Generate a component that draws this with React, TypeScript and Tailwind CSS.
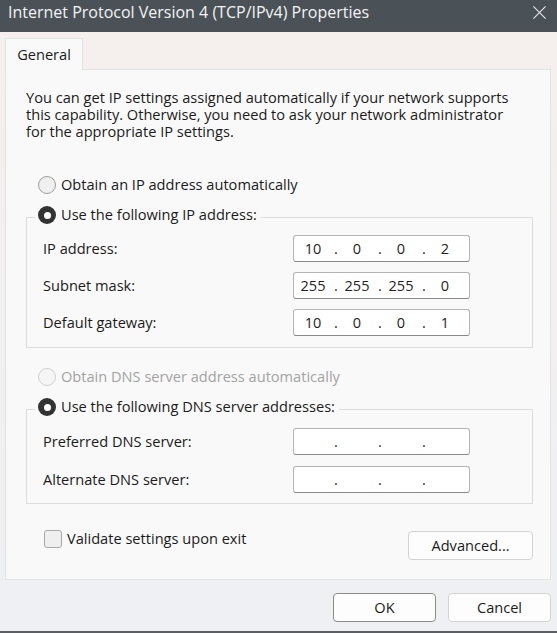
import React from "react";

const font = { fontFamily: '"Open Sans", "Noto Sans", sans-serif' };

function Radio({ checked, disabled }: { checked?: boolean; disabled?: boolean }) {
  if (checked) {
    return (
      <span className="flex h-[18px] w-[18px] shrink-0 items-center justify-center rounded-full bg-[#333333]">
        <span className="h-[7px] w-[7px] rounded-full bg-white" />
      </span>
    );
  }
  return (
    <span
      className={
        disabled
          ? "h-[18px] w-[18px] shrink-0 rounded-full border border-[#d0d0d0] bg-[#f5f5f5]"
          : "h-[18px] w-[18px] shrink-0 rounded-full border border-[#9d9d9d] bg-[#f0f0f0]"
      }
    />
  );
}

function IpBox({ parts }: { parts: string[] }) {
  return (
    <div className="flex h-[27px] w-[177px] items-center rounded-[3px] border border-[#b4b4b4] border-b-[#8a8a8a] bg-white pl-[2px] text-[14.5px] text-[#1e1e1e]">
      {parts.map((p, i) => (
        <React.Fragment key={i}>
          <span className="w-[34px] text-center">{p}</span>
          {i < 3 && <span className="w-[10px] pl-[2px] text-center">.</span>}
        </React.Fragment>
      ))}
    </div>
  );
}

function Row({ label, parts }: { label: string; parts: string[] }) {
  return (
    <div className="flex h-[27px] items-center">
      <span className="w-[250px]">{label}</span>
      <IpBox parts={parts} />
    </div>
  );
}

export default function App() {
  return (
    <div
      className="flex h-[633px] w-[557px] flex-col overflow-hidden bg-linear-to-b from-[#f6efee] to-[#eef0f3] text-[14.6px] text-[#1b1b1b]"
      style={font}
    >
      {/* Title bar */}
      <div className="flex h-[32px] shrink-0 items-center justify-between bg-[#4a5157] pl-[8px] pr-[10px]">
        <span className="pb-[8px] text-[16px] leading-[22px] text-[#f4f4f4]">Internet Protocol Version 4 (TCP/IPv4) Properties</span>
        <svg width="15" height="15" viewBox="0 0 16 16" className="mb-[7px]">
          <path d="M1.5 1.5 L14.5 14.5 M14.5 1.5 L1.5 14.5" stroke="#e6e6e6" strokeWidth="1.2" fill="none" />
        </svg>
      </div>

      <div className="flex flex-1 flex-col pl-[5px] pr-[6px] pt-[6px]">
        {/* Tab */}
        <div className="relative z-10 -mb-[1px] flex h-[32px] w-[78px] items-center justify-center rounded-t-[2px] border border-b-0 border-[#e2e2e2] bg-[#f9f9f9] text-[14.6px]">
          General
        </div>

        {/* Panel */}
        <div className="flex h-[511px] flex-col border border-[#e3e3e3] bg-[#f9f9f9]">
          <p className="pl-[20px] pt-[19px] leading-[17px]">
            You can get IP settings assigned automatically if your network supports
            <br />
            this capability. Otherwise, you need to ask your network administrator
            <br />
            for the appropriate IP settings.
          </p>

          <div className="ml-[32px] mt-[35px] flex h-[20px] items-center gap-[5px]">
            <Radio />
            <span>Obtain an IP address automatically</span>
          </div>

          <fieldset className="ml-[20px] mr-[17px] mt-[10px] border border-[#dcdcdc] pb-[11px]">
            <legend className="ml-[8px] flex h-[24px] items-start pl-[3px] pr-[4px]">
              <span className="flex h-[20px] items-center gap-[5px]">
                <Radio checked />
                <span>Use the following IP address:</span>
              </span>
            </legend>
            <div className="flex flex-col gap-[10px] pl-[16px] pt-[6px]">
              <Row label="IP address:" parts={["10", "0", "0", "2"]} />
              <Row label="Subnet mask:" parts={["255", "255", "255", "0"]} />
              <Row label="Default gateway:" parts={["10", "0", "0", "1"]} />
            </div>
          </fieldset>

          <div className="ml-[32px] mt-[19px] flex h-[20px] items-center gap-[5px] text-[#a3a3a3]">
            <Radio disabled />
            <span>Obtain DNS server address automatically</span>
          </div>

          <fieldset className="ml-[20px] mr-[17px] mt-[10px] border border-[#dcdcdc] pb-[10px]">
            <legend className="ml-[8px] flex h-[24px] items-start pl-[3px] pr-[4px]">
              <span className="flex h-[20px] items-center gap-[5px]">
                <Radio checked />
                <span>Use the following DNS server addresses:</span>
              </span>
            </legend>
            <div className="flex flex-col gap-[11px] pl-[16px] pt-[7px]">
              <Row label="Preferred DNS server:" parts={["", "", "", ""]} />
              <Row label="Alternate DNS server:" parts={["", "", "", ""]} />
            </div>
          </fieldset>

          <div className="ml-[38px] mr-[17px] mt-[26px] flex items-start justify-between">
            <div className="flex h-[18px] items-center gap-[5px]">
              <span className="h-[18px] w-[18px] rounded-[3px] border border-[#a8a8a8] bg-[#efefef]" />
              <span>Validate settings upon exit</span>
            </div>
            <button className="mt-[1px] flex h-[29px] w-[125px] items-center justify-center rounded-[4px] border border-[#d3d3d3] bg-[#fdfdfd] text-[14.6px]">
              Advanced...
            </button>
          </div>
        </div>

        {/* Bottom buttons */}
        <div className="mt-[13px] flex justify-end gap-[12px]">
          <button className="flex h-[29px] w-[103px] items-center justify-center rounded-[4px] border border-[#8c8c8c] bg-[#fdfdfd] text-[14.6px]">
            OK
          </button>
          <button className="flex h-[29px] w-[103px] items-center justify-center rounded-[4px] border border-[#d3d3d3] bg-[#fdfdfd] text-[14.6px]">
            Cancel
          </button>
        </div>
      </div>
      <div className="h-[2px] shrink-0 bg-[#5a5f64]" />
    </div>
  );
}
